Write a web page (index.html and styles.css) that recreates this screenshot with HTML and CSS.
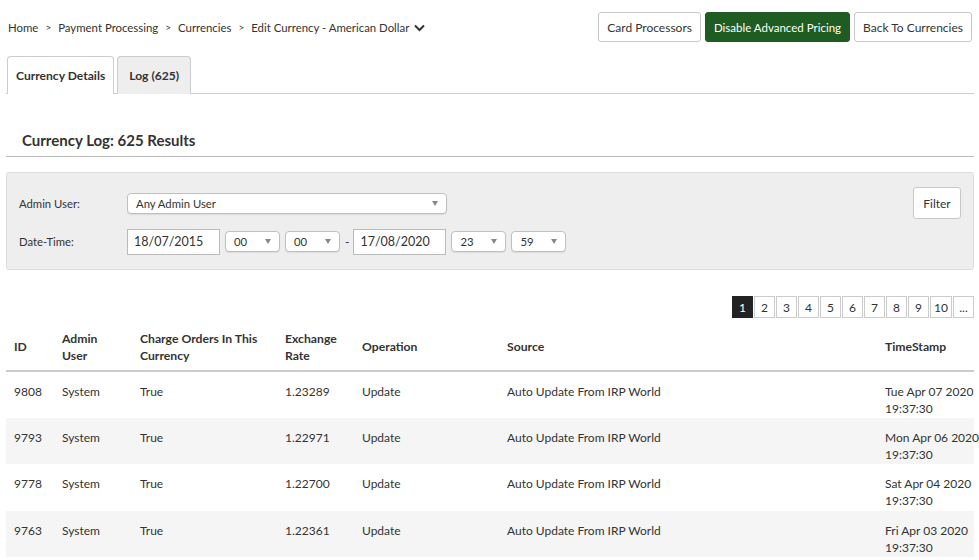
FILE: index.html
```html
<!DOCTYPE html>
<html>
<head>
<meta charset="utf-8">
<link rel="stylesheet" href="styles.css">
</head>
<body>
<div class="page">
  <div class="topbar">
    <div class="crumbs">
      <span>Home</span><span class="sep">&gt;</span>
      <span>Payment Processing</span><span class="sep">&gt;</span>
      <span>Currencies</span><span class="sep">&gt;</span>
      <span>Edit Currency - American Dollar</span>
      <svg class="chev" width="11" height="8" viewBox="0 0 11 8"><path d="M1 1.5 L5.5 6 L10 1.5" fill="none" stroke="#333" stroke-width="2"/></svg>
    </div>
    <div class="actions">
      <button class="btn">Card Processors</button>
      <button class="btn btn-green">Disable Advanced Pricing</button>
      <button class="btn">Back To Currencies</button>
    </div>
  </div>

  <div class="tabs">
    <div class="tab active">Currency Details</div>
    <div class="tab">Log (625)</div>
  </div>

  <h2 class="section-title">Currency Log: 625 Results</h2>

  <div class="filter">
    <div class="filter-fields">
      <div class="frow">
        <label class="flabel">Admin User:</label>
        <div class="select wide"><span>Any Admin User</span><i class="arrow"></i></div>
      </div>
      <div class="frow">
        <label class="flabel">Date-Time:</label>
        <div class="dateinput">18/07/2015</div>
        <div class="select small"><span>00</span><i class="arrow"></i></div>
        <div class="select small"><span>00</span><i class="arrow"></i></div>
        <span class="dash">-</span>
        <div class="dateinput">17/08/2020</div>
        <div class="select small"><span>23</span><i class="arrow"></i></div>
        <div class="select small"><span>59</span><i class="arrow"></i></div>
      </div>
    </div>
    <button class="btn filter-btn">Filter</button>
  </div>

  <div class="pager">
    <span class="pg current">1</span><span class="pg">2</span><span class="pg">3</span><span class="pg">4</span><span class="pg">5</span><span class="pg">6</span><span class="pg">7</span><span class="pg">8</span><span class="pg">9</span><span class="pg">10</span><span class="pg">...</span>
  </div>

  <table class="log">
    <colgroup>
      <col class="c-id"><col class="c-admin"><col class="c-charge"><col class="c-rate"><col class="c-op"><col class="c-src"><col class="c-ts">
    </colgroup>
    <thead>
      <tr><th>ID</th><th>Admin<br>User</th><th>Charge Orders In This<br>Currency</th><th>Exchange<br>Rate</th><th>Operation</th><th>Source</th><th>TimeStamp</th></tr>
    </thead>
    <tbody>
      <tr><td>9808</td><td>System</td><td>True</td><td>1.23289</td><td>Update</td><td>Auto Update From IRP World</td><td class="ts">Tue Apr 07 2020<br>19:37:30</td></tr>
      <tr><td>9793</td><td>System</td><td>True</td><td>1.22971</td><td>Update</td><td>Auto Update From IRP World</td><td class="ts">Mon Apr 06 2020<br>19:37:30</td></tr>
      <tr><td>9778</td><td>System</td><td>True</td><td>1.22700</td><td>Update</td><td>Auto Update From IRP World</td><td class="ts">Sat Apr 04 2020<br>19:37:30</td></tr>
      <tr><td>9763</td><td>System</td><td>True</td><td>1.22361</td><td>Update</td><td>Auto Update From IRP World</td><td class="ts">Fri Apr 03 2020<br>19:37:30</td></tr>
    </tbody>
  </table>
</div>
</body>
</html>
```

FILE: styles.css
```css
* { box-sizing: border-box; }
body {
  margin: 0;
  font-family: "Lato", "Open Sans", sans-serif;
  font-size: 12px;
  color: #333;
  background: #fff;
}
.page {
  padding: 12px 5px 0 6px;
}
.topbar {
  display: flex;
  justify-content: space-between;
  align-items: center;
  height: 30px;
}
.crumbs {
  padding-left: 2px;
  display: flex;
  align-items: center;
  white-space: nowrap;
  font-size: 11.4px;
}
.sep {
  font-size: 10px;
  margin: 0 7px;
}
.chev { margin-left: 5px; margin-top: 1px; }
.actions {
  display: flex;
  gap: 4px;
  padding-right: 2px;
}
.btn {
  font-family: inherit;
  font-size: 12px;
  color: #333;
  background: #fff;
  border: 1px solid #c8c8c8;
  border-radius: 3px;
  height: 30px;
  padding: 0 8px;
  cursor: pointer;
}
.btn-green {
  background: #1f5c21;
  border-color: #1f5c21;
  color: #fff;
  font-size: 11.5px;
}
.tabs {
  display: flex;
  gap: 3px;
  margin-top: 14px;
  padding-left: 1px;
  border-bottom: 1px solid #ccc;
  height: 38px;
}
.tab {
  height: 38px;
  padding: 0 8px;
  display: flex;
  align-items: center;
  font-weight: 700;
  font-size: 12.1px;
  border: 1px solid #ccc;
  border-bottom: none;
  border-radius: 4px 4px 0 0;
  background: #eee;
}
.tab + .tab { padding: 0 11px; }
.tab.active {
  background: #fff;
  margin-bottom: -1px;
}
.section-title {
  margin: 36px 0 0;
  padding: 0 0 6px 16px;
  font-size: 15px;
  font-weight: 700;
  border-bottom: 1px solid #bbb;
  line-height: 20px;
}
.filter {
  margin-top: 15px;
  background: #eee;
  border: 1px solid #ddd;
  border-radius: 3px;
  height: 98px;
  display: flex;
  justify-content: space-between;
  align-items: flex-start;
  padding: 14px 12px 0 12px;
}
.filter-fields {
  display: flex;
  flex-direction: column;
  gap: 17px;
  padding-top: 6px;
}
.frow {
  display: flex;
  align-items: center;
  height: 21px;
}
.flabel {
  width: 108px;
  font-size: 11.3px;
}
.select {
  height: 21px;
  background: #fff;
  border: 1px solid #c0c0c0;
  border-radius: 4px;
  display: flex;
  align-items: center;
  justify-content: space-between;
  padding: 0 8px;
  font-size: 11.3px;
  box-shadow: 0 1px 1px rgba(0,0,0,0.08);
}
.select.wide { width: 320px; }
.select.small { width: 55px; margin-left: 5px; }
.arrow {
  width: 0; height: 0;
  border-left: 3.5px solid transparent;
  border-right: 3.5px solid transparent;
  border-top: 5px solid #888;
}
.dateinput {
  width: 93px;
  height: 26px;
  background: #fff;
  border: 1px solid #bbb;
  padding: 0 6px;
  display: flex;
  align-items: center;
  font-size: 12.5px;
}
.dash { margin: 0 4px 0 5px; font-size: 12px; }
.filter-btn {
  height: 32px;
  width: 48px;
  padding: 0;
  font-size: 12px;
}
.pager {
  display: flex;
  justify-content: flex-end;
  gap: 1px;
  margin-top: 26px;
}
.pg {
  min-width: 21px;
  height: 22px;
  padding: 0 3px;
  border: 1px solid #ccc;
  background: #fff;
  display: flex;
  align-items: center;
  justify-content: center;
  font-size: 12px;
  color: #333;
}
.pg.current {
  background: #222;
  color: #fff;
  border-color: #222;
}
.log {
  width: 100%;
  margin-top: 8px;
  border-collapse: collapse;
  table-layout: fixed;
}
.c-id { width: 48px; }
.c-admin { width: 78px; }
.c-charge { width: 145px; }
.c-rate { width: 77px; }
.c-op { width: 145px; }
.c-src { width: 378px; }
.log th {
  text-align: left;
  font-weight: 700;
  font-size: 12.2px;
  padding: 3px 8px 6px;
  line-height: 17px;
  height: 45px;
  vertical-align: middle;
  border-bottom: 2px solid #ccc;
}
.log td {
  padding: 11px 0 0 8px;
  vertical-align: top;
  line-height: 17px;
  height: 46.5px;
}
.log td.ts { white-space: nowrap; }
.log tbody tr:nth-child(even) td { background: #f5f5f5; }
```
